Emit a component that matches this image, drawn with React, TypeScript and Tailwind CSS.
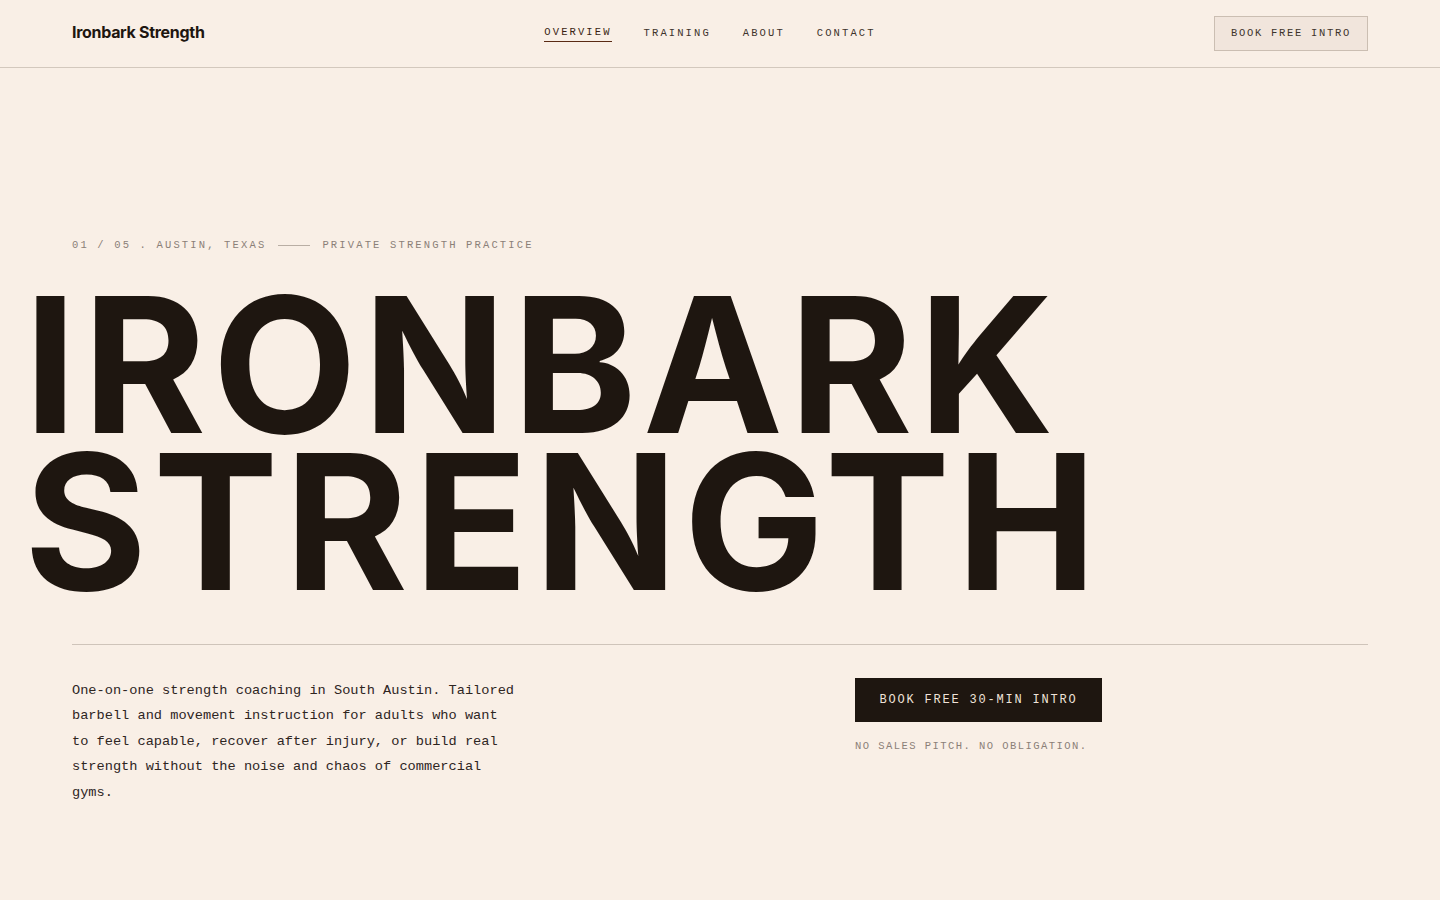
import React from "react";

const mono = { fontFamily: '"Liberation Mono", "DejaVu Sans Mono", monospace' };

const navItems = ["OVERVIEW", "TRAINING", "ABOUT", "CONTACT"];

export default function App() {
  return (
    <div className="min-h-[900px] w-full bg-[#f9efe6] text-[#1e1610]">
      {/* header */}
      <header className="flex h-[68px] items-center justify-between border-b border-[#d3c8bd] px-[72px]">
        <div className="-mt-[3px] w-[290px] font-['Inter',sans-serif] text-[16px] font-bold tracking-[-0.3px]">
          Ironbark Strength
        </div>
        <nav className="flex items-center gap-[32px]" style={mono}>
          {navItems.map((item, i) => (
            <a
              key={item}
              className={
                "text-[10.5px] tracking-[2.1px] " +
                (i === 0
                  ? "border-b border-[#5a2a14] pb-[1px] text-[#3a1f12]"
                  : "text-[#3d332c]")
              }
            >
              {item}
            </a>
          ))}
        </nav>
        <div className="flex w-[310px] justify-end">
          <button
            className="h-[35px] w-[154px] border border-[#cbbeb2] bg-[#f1e5dc] text-[10.5px] tracking-[1.7px] text-[#3d332c]"
            style={mono}
          >
            BOOK FREE INTRO
          </button>
        </div>
      </header>

      {/* hero */}
      <section className="pt-[170px]">
        <div
          className="flex items-center gap-[12px] px-[72px] text-[10.5px] tracking-[2.15px] text-[#8b8078]"
          style={mono}
        >
          <span>01 / 05 . AUSTIN, TEXAS</span>
          <span className="h-px w-[32px] bg-[#b9aea4]" />
          <span>PRIVATE STRENGTH PRACTICE</span>
        </div>

        <h1 className="mt-[32px] pl-[24px] font-['Inter',sans-serif] text-[188px] font-bold leading-[157px] tracking-[6px] text-[#1e1610]">
          <span className="block">IRONBARK</span>
          <span className="block">STRENGTH</span>
        </h1>

        <div className="mx-[72px] mt-[44px] border-t border-[#cfc4ba]" />

        <div className="flex px-[72px] pt-[33px]">
          <div className="w-[783px]">
            <p
              className="w-[446px] text-[13.65px] leading-[25.5px] text-[#2e251f]"
              style={mono}
            >
              One-on-one strength coaching in South Austin. Tailored barbell and
              movement instruction for adults who want to feel capable, recover
              after injury, or build real strength without the noise and chaos
              of commercial gyms.
            </p>
          </div>
          <div className="flex flex-col items-start">
            <button
              className="h-[44px] w-[247px] bg-[#1e1610] text-[12px] tracking-[1.8px] text-[#efe3d9]"
              style={mono}
            >
              BOOK FREE 30-MIN INTRO
            </button>
            <span
              className="mt-[17px] text-[10.5px] tracking-[1.45px] text-[#8b8078]"
              style={mono}
            >
              NO SALES PITCH. NO OBLIGATION.
            </span>
          </div>
        </div>
      </section>
    </div>
  );
}
